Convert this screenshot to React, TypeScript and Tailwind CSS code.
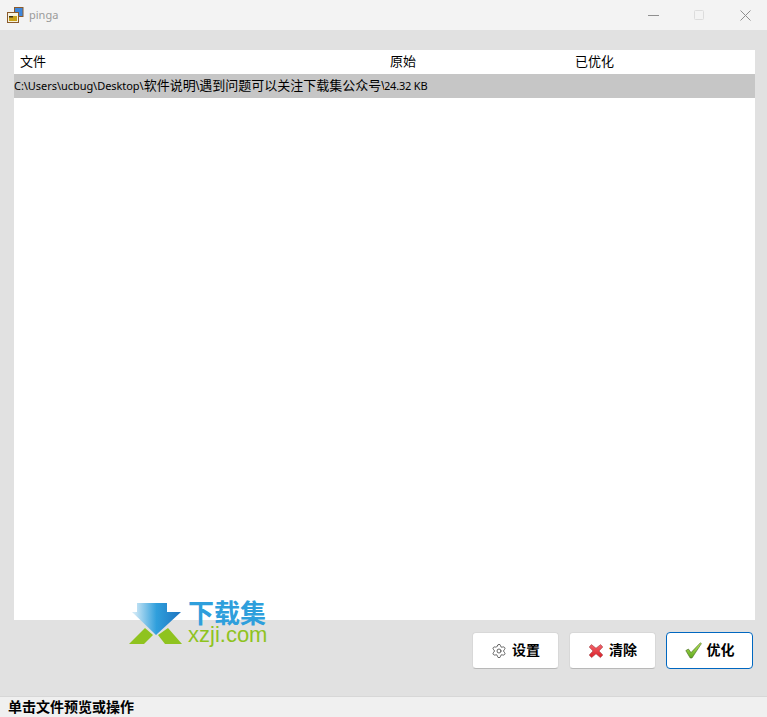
import { Settings } from "lucide-react";

const font = "font-['Liberation_Sans','Noto_Sans_CJK_SC',sans-serif]";

const ActionButton = ({ label, icon, active }: { label: string; icon: React.ReactNode; active?: boolean }) => (
  <button
    className={`w-[87px] h-[37px] flex items-center justify-center gap-[5px] rounded-[4px] bg-white border text-[14px] font-bold text-black ${
      active ? "border-[#0067c0]" : "border-[#d8d8d8] border-b-[#b8b8b8]"
    }`}
  >
    {icon}
    <span>{label}</span>
  </button>
);

const CrossIcon = () => (
  <svg width="16" height="16" viewBox="0 0 16 16">
    <defs>
      <linearGradient id="cross" x1="0" x2="0" y1="0" y2="1">
        <stop offset="0" stopColor="#f4656c" />
        <stop offset="1" stopColor="#d91f28" />
      </linearGradient>
    </defs>
    <path
      d="M3.4 1.6 8 5.2l4.6-3.6 2.2 2.4L11 8l3.8 4-2.4 2.6L8 10.8l-4.4 3.8L1.2 12 5 8 1.2 4z"
      fill="url(#cross)"
      stroke="#8f2a2e"
      strokeWidth="0.5"
    />
  </svg>
);

const CheckIcon = () => (
  <svg width="17" height="17" viewBox="0 0 17 17">
    <defs>
      <linearGradient id="check" x1="0" x2="0" y1="0" y2="1">
        <stop offset="0" stopColor="#b7e65a" />
        <stop offset="1" stopColor="#5ea81e" />
      </linearGradient>
    </defs>
    <path d="M.8 8.6 3.4 7l2.6 3.6L15.4.8l1 .8L7 16H5.2z" fill="url(#check)" stroke="#44651f" strokeWidth="0.6" />
  </svg>
);

const AppIcon = () => (
  <svg width="17" height="16" viewBox="0 0 17 16">
    <rect x="7.5" y="0.5" width="8.5" height="9" fill="#3f87dc" stroke="#8a5a2c" />
    <rect x="0.5" y="5.5" width="11" height="10" fill="#f7f3df" stroke="#8a5a2c" />
    <rect x="2" y="9" width="8" height="5" fill="#c9a21a" />
    <rect x="2" y="9" width="4" height="1.5" fill="#3b3214" />
  </svg>
);

const Watermark = () => (
  <div className="absolute left-[129px] top-[603px] flex items-start gap-[5px]">
    <svg width="54" height="42" viewBox="0 0 54 42">
      <defs>
        <linearGradient id="arrow" x1="0" x2="1" y1="0" y2="0">
          <stop offset="0.05" stopColor="#cfe8f6" />
          <stop offset="0.5" stopColor="#2f9fdc" />
          <stop offset="1" stopColor="#1f74c0" />
        </linearGradient>
      </defs>
      <path d="M8 0h30v9h14L27 32 3 9h5z" fill="url(#arrow)" />
      <path d="M0 41 16 25 24 32 15 41z" fill="#8fc31f" />
      <path d="M29 32 39 25 53 41H36z" fill="#8fc31f" />
    </svg>
    <div className="flex flex-col items-start leading-none">
      <span className="text-[26px] h-[22px] leading-[23px] font-bold text-[#2e9fdc]">下载集</span>
      <span className="text-[22px] h-[20px] leading-[19px] text-[#8fc31f]">xzji.com</span>
    </div>
  </div>
);

export default function App() {
  return (
    <div className={`relative w-[767px] h-[717px] flex flex-col bg-[#e1e1e1] overflow-hidden ${font}`}>
      <div className="h-[30px] shrink-0 bg-[#f3f3f3] flex items-center">
        <div className="ml-[7px] mr-[5px]">
          <AppIcon />
        </div>
        <span className="text-[11px] font-['Noto_Sans',sans-serif] text-[#9a9a9a]">pinga</span>
        <div className="ml-auto flex items-center">
          <svg className="mr-[35px]" width="11" height="11" viewBox="0 0 11 11">
            <path d="M0 5.5h11" stroke="#8f8f8f" />
          </svg>
          <svg className="mr-[35px]" width="11" height="11" viewBox="0 0 11 11">
            <rect x="0.5" y="0.5" width="9" height="9" rx="1" fill="none" stroke="#dcdcdc" />
          </svg>
          <svg className="mr-[16px]" width="11" height="11" viewBox="0 0 11 11">
            <path d="M0.5 0.5l10 10M10.5 0.5l-10 10" stroke="#8f8f8f" />
          </svg>
        </div>
      </div>

      <div className="flex-1 flex flex-col pl-[14px] pr-[12px] pt-[20px]">
        <div className="h-[570px] bg-white">
          <div className="h-[24px] flex items-center text-[13px] text-black">
            <span className="w-[376px] pl-[6px]">文件</span>
            <span className="w-[185px]">原始</span>
            <span>已优化</span>
          </div>
          <div className="h-[24px] flex items-center bg-[#c6c6c6] text-black">
            <span className="w-[370px] overflow-hidden whitespace-nowrap text-[13px]">
              <span className="text-[11px] font-['Noto_Sans',sans-serif] tracking-[-0.05px]">C:\Users\ucbug\Desktop\</span>
              软件说明\遇到问题可以关注下载集公众号\
            </span>
            <span className="text-[11px] font-['Noto_Sans',sans-serif] tracking-[-0.2px]">24.32 KB</span>
          </div>
        </div>

        <div className="flex justify-end gap-[10px] mt-[12px] pr-[2px]">
          <ActionButton label="设置" icon={<Settings size={16} strokeWidth={1.2} className="text-[#444444]" />} />
          <ActionButton label="清除" icon={<CrossIcon />} />
          <ActionButton label="优化" icon={<CheckIcon />} active />
        </div>
      </div>

      <div className="h-[21px] shrink-0 bg-[#f0f0f0] border-t border-[#d7d7d7] flex items-center pl-[8px] text-[14px] font-bold text-black">
        单击文件预览或操作
      </div>

      <Watermark />
    </div>
  );
}
